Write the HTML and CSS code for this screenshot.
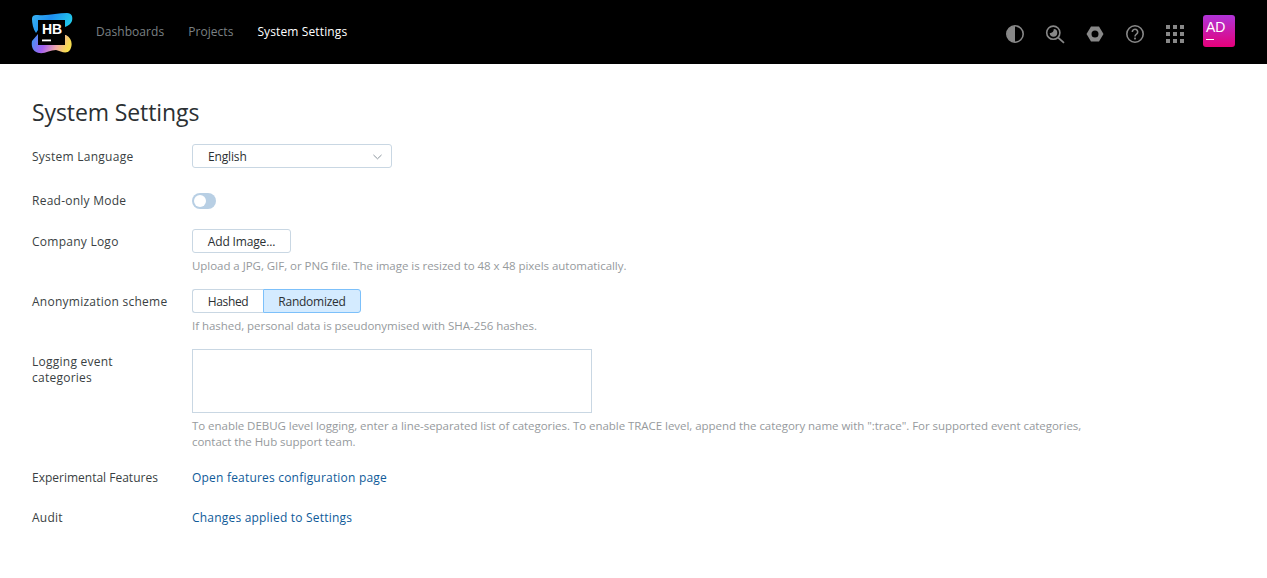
FILE: index.html
```html
<!DOCTYPE html>
<html lang="en">
<head>
<meta charset="utf-8">
<title>System Settings</title>
<link rel="stylesheet" href="styles.css">
</head>
<body>
<header class="topbar">
  <a class="logo" aria-label="Hub">
    <svg width="44" height="44" viewBox="0 0 44 44">
      <defs>
        <linearGradient id="lg1" x1="0" y1="0" x2="1" y2="0.3"><stop offset="0" stop-color="#3ab4f2"/><stop offset="0.5" stop-color="#1e8ff0"/><stop offset="1" stop-color="#22c8ea"/></linearGradient>
        <linearGradient id="lg2" x1="0" y1="0" x2="1" y2="0.2"><stop offset="0" stop-color="#2f9cf5"/><stop offset="0.4" stop-color="#a45ff0"/><stop offset="0.72" stop-color="#f0a8a8"/><stop offset="1" stop-color="#f6dc50"/></linearGradient>
      </defs>
      <path d="M2 9C2 5 5 5 8 5C18 6 28 3 37 3C42 3 43 7 42 11C41 14 38 16 35 17L8 20L6 23C3 19 2 13 2 9Z" fill="url(#lg1)"/>
      <path d="M8 24L2 31C1 37 3 42 9 43C15 44 20 40 26 40C31 41 36 45 40 40C43 35 42 28 36 25Z" fill="url(#lg2)"/>
      <rect x="8" y="10" width="27" height="25" fill="#000"/>
      <text x="12" y="23.500" class="logo-text">HB</text>
      <rect x="12" y="29.500" width="9" height="1.800" fill="#fff"/>
    </svg>
  </a>
  <nav class="nav">
    <a class="nav-link">Dashboards</a>
    <a class="nav-link">Projects</a>
    <a class="nav-link nav-active">System Settings</a>
  </nav>
  <div class="tools">
    <span class="tool"><svg width="20" height="20" viewBox="0 0 20 20"><circle cx="10" cy="10" r="8.200" fill="none" stroke="#888" stroke-width="1.600"/><path d="M10 2a8 8 0 0 0 0 16Z" fill="#888"/></svg></span>
    <span class="tool"><svg width="20" height="20" viewBox="0 0 20 20"><circle cx="8.300" cy="8.700" r="6.600" fill="none" stroke="#888" stroke-width="1.600"/><path d="M4.700 9.200C7.300 9.200 8.800 7.700 8.800 5.100A3.800 3.800 0 1 1 4.700 9.200Z" fill="#888"/><path d="M13 13.500l6 5.300" stroke="#888" stroke-width="1.700"/></svg></span>
    <span class="tool"><svg width="20" height="20" viewBox="0 0 20 20"><path fill-rule="evenodd" d="M6 2.500h8l4.500 7.500-4.500 7.500H6L1.500 10ZM10 6.500a3.500 3.500 0 1 0 0 7 3.500 3.500 0 0 0 0-7Z" fill="#888"/></svg></span>
    <span class="tool"><svg width="20" height="20" viewBox="0 0 20 20"><circle cx="10" cy="10" r="8.200" fill="none" stroke="#888" stroke-width="1.600"/><path d="M7.300 8a2.700 2.700 0 1 1 4.200 2.200C10.500 10.900 10 11.300 10 12.500" fill="none" stroke="#888" stroke-width="1.600"/><rect x="9.100" y="13.600" width="1.800" height="1.800" fill="#888"/></svg></span>
    <span class="tool"><svg width="20" height="20" viewBox="0 0 20 20" fill="#888"><rect x="1" y="1" width="4" height="4"/><rect x="8" y="1" width="4" height="4"/><rect x="15" y="1" width="4" height="4"/><rect x="1" y="8" width="4" height="4"/><rect x="8" y="8" width="4" height="4"/><rect x="15" y="8" width="4" height="4"/><rect x="1" y="15" width="4" height="4"/><rect x="8" y="15" width="4" height="4"/><rect x="15" y="15" width="4" height="4"/></svg></span>
    <span class="avatar"><span class="avatar-text">AD</span><span class="avatar-bar"></span></span>
  </div>
</header>
<main class="page">
  <h1 class="title">System Settings</h1>
  <div class="row row-language">
    <div class="label">System Language</div>
    <div class="control">
      <div class="select"><span class="select-value">English</span>
        <svg class="chevron" width="9" height="6" viewBox="0 0 10 6"><path d="M.5.700 5 5 9.500.700" fill="none" stroke="#8a949c" stroke-width="1.100"/></svg>
      </div>
    </div>
  </div>
  <div class="row row-readonly">
    <div class="label">Read-only Mode</div>
    <div class="control"><span class="toggle"><span class="knob"></span></span></div>
  </div>
  <div class="row row-logo">
    <div class="label">Company Logo</div>
    <div class="control">
      <button class="btn btn-add">Add Image...</button>
      <p class="help">Upload a JPG, GIF, or PNG file. The image is resized to 48 x 48 pixels automatically.</p>
    </div>
  </div>
  <div class="row row-anon">
    <div class="label">Anonymization scheme</div>
    <div class="control">
      <div class="group">
        <button class="btn seg-left">Hashed</button>
        <button class="btn seg-right">Randomized</button>
      </div>
      <p class="help">If hashed, personal data is pseudonymised with SHA-256 hashes.</p>
    </div>
  </div>
  <div class="row row-logging">
    <div class="label label-multi">Logging event categories</div>
    <div class="control">
      <div class="textarea"></div>
      <p class="help">To enable DEBUG level logging, enter a line-separated list of categories. To enable TRACE level, append the category name with ":trace". For supported event categories, contact the Hub support team.</p>
    </div>
  </div>
  <div class="row row-exp">
    <div class="label">Experimental Features</div>
    <div class="control"><a class="link">Open features configuration page</a></div>
  </div>
  <div class="row row-audit">
    <div class="label">Audit</div>
    <div class="control"><a class="link">Changes applied to Settings</a></div>
  </div>
</main>
</body>
</html>
```
FILE: styles.css
```css
* { box-sizing: border-box; }
html, body { margin: 0; padding: 0; }
body {
  font-family: "Open Sans", "Noto Sans", sans-serif;
  font-size: 12px;
  line-height: 16px;
  color: #1f2326;
  background: #fff;
  height: 578px;
  overflow: hidden;
}
.topbar {
  height: 64px;
  background: #000;
  display: flex;
  align-items: center;
  padding: 0 32px 0 30px;
}
.logo { display: block; width: 44px; height: 44px; margin-right: 22px; }
.logo svg { display: block; }
.logo-text { font-family: "Liberation Sans", sans-serif; font-weight: 700; font-size: 14px; fill: #fff; }
.nav { display: flex; gap: 24px; }
.nav-link { color: #7b8084; font-size: 12px; line-height: 16px; letter-spacing: 0.05px; }
.nav-active { color: #fff; letter-spacing: 0.12px; }
.tools { margin-left: auto; display: flex; align-items: center; }
.tool { width: 40px; height: 40px; margin-top: 4px; display: flex; align-items: center; justify-content: center; }
.tool svg { display: block; }
.avatar {
  width: 32px;
  height: 32px;
  margin-left: 8px;
  margin-bottom: 2px;
  border-radius: 3px;
  background: linear-gradient(180deg, #b034d8 0%, #e6007a 100%);
  display: flex;
  flex-direction: column;
  padding: 4px 3px;
  color: #fff;
}
.avatar-text { font-family: "Liberation Sans", sans-serif; font-size: 14px; line-height: 16px; }
.avatar-bar { width: 8px; height: 1px; background: #fff; margin-top: 4px; }
.page { padding: 34px 32px 0; }
.title { margin: 0 0 18px; font-weight: 400; font-size: 23px; line-height: 28px; letter-spacing: -0.1px; color: #2b3033; }
.row { display: flex; }
.label { width: 160px; flex: none; padding-top: 5px; color: #3a3f43; letter-spacing: 0.25px; white-space: nowrap; }
.label-multi { padding-right: 50px; white-space: normal; }
.control { flex: 1; min-width: 0; }
.row-language { height: 49px; }
.row-readonly { height: 36px; }
.row-readonly .label { padding-top: 0; }
.row-logo { height: 60px; }
.row-anon { height: 60px; }
.row-logging { height: 121px; }
.row-exp { height: 40px; }
.select {
  width: 200px;
  height: 24px;
  border: 1px solid #c9d7e3;
  border-radius: 3px;
  display: flex;
  align-items: center;
  justify-content: space-between;
  padding: 1px 9px 0 15px;
  color: #2b3033;
}
.select-value { letter-spacing: -0.15px; }
.chevron { display: block; margin-top: 1px; }
.toggle {
  display: block;
  width: 24px;
  height: 16px;
  border-radius: 8px;
  background: #b8cfe4;
  position: relative;
}
.knob {
  position: absolute;
  left: 2px;
  top: 2px;
  width: 12px;
  height: 12px;
  border-radius: 50%;
  background: #fff;
}
.btn {
  font: inherit;
  color: #2b3033;
  height: 24px;
  background: #fff;
  border: 1px solid #c9d7e3;
  border-radius: 3px;
  padding: 1px 0 0;
  display: block;
  white-space: nowrap;
  letter-spacing: -0.15px;
}
.btn-add { width: 99px; }
.group { display: flex; }
.seg-left { width: 71px; border-radius: 3px 0 0 3px; border-right: 0; letter-spacing: -0.35px; }
.seg-right {
  width: 98px;
  border-radius: 0 3px 3px 0;
  background: #d4ebff;
  border-color: #7cc0fa;
  letter-spacing: -0.25px;
}
.help { margin: 5px 0 0; color: #969a9d; width: 900px; font-size: 11.5px; letter-spacing: -0.04px; }
.textarea { width: 400px; height: 64px; border: 1px solid #c9d7e3; }
.link { color: #0f5b99; letter-spacing: 0.2px; }
.row-exp .label { letter-spacing: 0; }
.row-exp .label, .row-audit .label { padding-top: 0; }
```
